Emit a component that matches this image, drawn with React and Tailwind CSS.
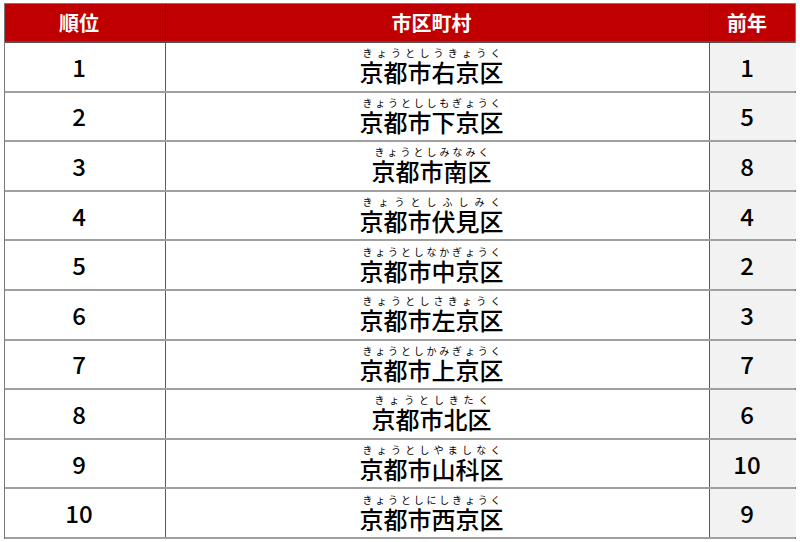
import React from "react";

const rows = [
  ["1", "京都市右京区", "きょうとしうきょうく", "1"],
  ["2", "京都市下京区", "きょうとししもぎょうく", "5"],
  ["3", "京都市南区", "きょうとしみなみく", "8"],
  ["4", "京都市伏見区", "きょうとしふしみく", "4"],
  ["5", "京都市中京区", "きょうとしなかぎょうく", "2"],
  ["6", "京都市左京区", "きょうとしさきょうく", "3"],
  ["7", "京都市上京区", "きょうとしかみぎょうく", "7"],
  ["8", "京都市北区", "きょうとしきたく", "6"],
  ["9", "京都市山科区", "きょうとしやましなく", "10"],
  ["10", "京都市西京区", "きょうとしにしきょうく", "9"],
];

const font = { fontFamily: '"Noto Sans CJK JP", "Noto Sans", sans-serif' };

export default function App() {
  return (
    <div className="w-[800px] h-[542px] bg-white pt-[3px] pl-[4px]" style={font}>
      <div className="w-[792px] border-t border-l border-r border-[#7a7a7a]">
        <div className="grid grid-cols-[161px_544px_86px] h-[39px] bg-[#c00000] border-b-2 border-[#505050] text-white font-bold text-[20px]">
          <div className="flex items-center justify-center pr-[12px] border-r border-[#5a1a1a]">順位</div>
          <div className="flex items-center justify-center pr-[12px] border-r border-[#5a1a1a]">市区町村</div>
          <div className="flex items-center justify-center pr-[12px]">前年</div>
        </div>
        {rows.map(([rank, kanji, kana, prev]) => (
          <div
            key={rank}
            className="grid grid-cols-[161px_544px_86px] h-[49.6px] border-b-2 border-[#a0a0a0] text-black"
          >
            <div className="flex items-center justify-center pr-[12px] border-r border-[#5a5a5a] text-[24px] font-medium">
              {rank}
            </div>
            <div className="flex items-center justify-center pr-[12px] border-r border-[#5a5a5a]">
              <div className="inline-flex flex-col items-stretch mt-[-3px]">
                <div className="flex justify-between px-[3px] text-[10px] leading-[13px]">
                  {kana.split("").map((c, i) => (
                    <span key={i}>{c}</span>
                  ))}
                </div>
                <div className="text-[24px] leading-[25px] font-medium">{kanji}</div>
              </div>
            </div>
            <div className="flex items-center justify-center pr-[12px] bg-[#f2f2f2] text-[24px] font-medium">
              {prev}
            </div>
          </div>
        ))}
      </div>
    </div>
  );
}
